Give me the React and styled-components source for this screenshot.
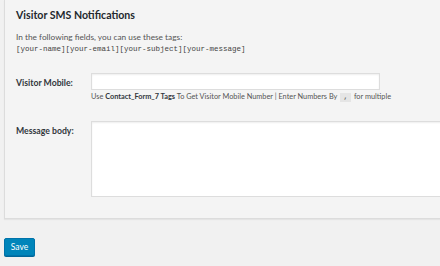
import React from 'react';
import styled, { createGlobalStyle } from 'styled-components';

const GlobalStyle = createGlobalStyle`
    html, body {
        margin: 0;
        padding: 0;
        background: #f1f1f1;
        overflow: hidden;
    }
    body {
        font-family: Lato, "Liberation Sans", sans-serif;
        color: #444;
    }
`

const Page = styled.div`
    width: 440px;
    height: 266px;
    padding-left: 4px;
    box-sizing: border-box;
    overflow: hidden;
`

const Panel = styled.div`
    width: 460px;
    background: #f4f4f4;
    border: 1px solid #dcdcdc;
    border-top: none;
    box-shadow: 0 1px 1px rgba(0, 0, 0, 0.05);
    padding: 6px 0 21px 11px;
    box-sizing: border-box;
`

const Title = styled.h2`
    margin: 0;
    font-size: 10.6px;
    line-height: 18px;
    font-weight: 700;
    color: #23282d;
`

const Intro = styled.p`
    margin: 7px 0 0;
    font-size: 8.3px;
    line-height: 12px;
    color: #555;
`

const Tags = styled.code`
    display: block;
    font-family: "Liberation Mono", monospace;
    font-size: 7.5px;
    line-height: 12px;
    color: #444;
`

const Row = styled.div`
    display: flex;
    align-items: flex-start;
    margin-top: ${props => props.$gap}px;
`

const Label = styled.label`
    width: 75px;
    flex: none;
    padding-top: 4px;
    font-size: 8.7px;
    line-height: 12px;
    font-weight: 700;
    color: #32373c;
`

const Field = styled.div`
    display: flex;
    flex-direction: column;
`

const Input = styled.input`
    width: 289px;
    height: 17px;
    margin: 0;
    padding: 0 4px;
    box-sizing: border-box;
    background: #fff;
    border: 1px solid #ddd;
    box-shadow: inset 0 1px 2px rgba(0, 0, 0, 0.07);
    outline: none;
`

const Help = styled.p`
    margin: 1px 0 0;
    font-size: 7.35px;
    line-height: 12px;
    color: #555;
    white-space: nowrap;

    strong {
        color: #32373c;
    }
`

const Code = styled.code`
    display: inline-block;
    margin: 0 3px;
    padding: 0 3px;
    background: #e5e5e5;
    font-family: "Liberation Mono", monospace;
    font-size: 7.5px;
    line-height: 9px;
`

const TextArea = styled.textarea`
    display: block;
    width: 380px;
    height: 76px;
    margin: 0;
    box-sizing: border-box;
    background: #fff;
    border: 1px solid #ddd;
    box-shadow: inset 0 1px 2px rgba(0, 0, 0, 0.07);
    resize: none;
    outline: none;
`

const SaveButton = styled.button`
    margin-top: 19px;
    width: 31px;
    height: 18px;
    padding: 0;
    background: #0085ba;
    border: 1px solid #0073aa;
    border-radius: 2px;
    box-shadow: 0 1px 0 #006799;
    color: #fff;
    font-family: Lato, "Liberation Sans", sans-serif;
    font-size: 8.5px;
    line-height: 16px;
`

export default function App() {
    return (
        <Page>
            <GlobalStyle />
            <Panel>
                <Title>Visitor SMS Notifications</Title>
                <Intro>In the following fields, you can use these tags:</Intro>
                <Tags>[your-name][your-email][your-subject][your-message]</Tags>
                <Row $gap={18}>
                    <Label>Visitor Mobile:</Label>
                    <Field>
                        <Input type="text" />
                        <Help>
                            Use <strong>Contact_Form_7 Tags</strong> To Get Visitor Mobile Number | Enter Numbers By
                            <Code>,</Code>for multiple
                        </Help>
                    </Field>
                </Row>
                <Row $gap={18}>
                    <Label>Message body:</Label>
                    <TextArea />
                </Row>
            </Panel>
            <SaveButton>Save</SaveButton>
        </Page>
    );
}
